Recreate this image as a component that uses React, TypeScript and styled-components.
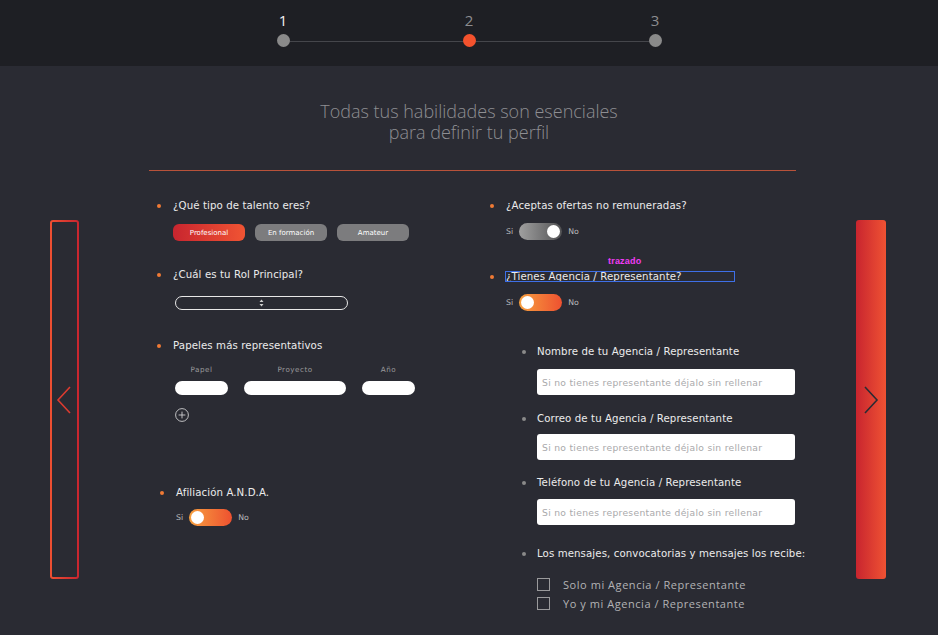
import React from "react";
import styled, { createGlobalStyle } from "styled-components";

const Global = createGlobalStyle`
  html, body { margin: 0; padding: 0; background: #2a2b33; }
  body { font-family: "DejaVu Sans", sans-serif; width: 938px; height: 635px; overflow: hidden; }
  * { box-sizing: border-box; }
`;

const Header = styled.header`
  height: 66px;
  background: #1e1f24;
  display: flex;
  justify-content: center;
  padding-top: 11px;
`;

const Stepper = styled.div`
  position: relative;
  width: 386px;
  display: flex;
  justify-content: space-between;
  &::before {
    content: "";
    position: absolute;
    left: 7px;
    right: 7px;
    top: 30px;
    height: 1px;
    background: #45464b;
  }
`;

const Step = styled.div`
  width: 14px;
  display: flex;
  flex-direction: column;
  align-items: center;
  gap: 5px;
  position: relative;
`;

const StepNum = styled.span<{ $active?: boolean }>`
  font-family: "Open Sans", sans-serif;
  font-size: 15px;
  line-height: 18px;
  color: ${(p) => (p.$active ? "#f2f2f2" : "#8d8d90")};
`;

const Dot = styled.span<{ $current?: boolean }>`
  width: 13px;
  height: 13px;
  border-radius: 50%;
  background: ${(p) => (p.$current ? "#f4522d" : "#8a8a8a")};
`;

const Title = styled.h1`
  margin: 0;
  padding-top: 35px;
  text-align: center;
  font-family: "Open Sans", sans-serif;
  font-weight: 300;
  font-size: 18px;
  line-height: 21px;
  color: #8e8e92;
`;

const TitleLine = styled.span`
  display: block;
`;

const Divider = styled.hr`
  margin: 27px 142px 0 149px;
  border: none;
  height: 1px;
  background: #b8523a;
`;

const BodyRow = styled.div`
  display: flex;
  align-items: flex-start;
  padding-left: 50px;
`;

const NavLeft = styled.button`
  margin-top: 49px;
  width: 29px;
  height: 359px;
  border: 2px solid transparent;
  border-radius: 3px;
  background: linear-gradient(#2a2b33, #2a2b33) padding-box,
    linear-gradient(90deg, #ef5032, #c8252f) border-box;
  display: flex;
  align-items: center;
  justify-content: center;
  padding: 0 2px 0 0;
  cursor: pointer;
`;

const NavRight = styled.button`
  margin-top: 49px;
  margin-left: 60px;
  width: 30px;
  height: 359px;
  border: none;
  border-radius: 3px;
  background: linear-gradient(90deg, #c8252f, #ef5233);
  display: flex;
  align-items: center;
  justify-content: center;
  padding: 0;
  cursor: pointer;
`;

const Form = styled.div`
  margin-left: 70px;
  width: 647px;
  padding: 28px 0 0 8px;
  display: grid;
  grid-template-columns: 333px 1fr;
`;

const Column = styled.div`
  display: flex;
  flex-direction: column;
`;

const Field = styled.div<{ $mt?: number; $indent?: number }>`
  margin-top: ${(p) => p.$mt ?? 0}px;
  padding-left: ${(p) => p.$indent ?? 0}px;
  display: flex;
  flex-direction: column;
`;

const Label = styled.div<{ $sub?: boolean }>`
  position: relative;
  display: flex;
  align-items: center;
  gap: ${(p) => (p.$sub ? 11 : 12)}px;
  font-size: 10.2px;
  line-height: 14px;
  color: #ececec;
  letter-spacing: 0.1px;
  white-space: nowrap;
  &::before {
    content: "";
    width: 4px;
    height: 4px;
    border-radius: 50%;
    flex: none;
    background: ${(p) => (p.$sub ? "#8a8a8a" : "#f07a35")};
  }
`;

const LabelText = styled.span<{ $outlined?: boolean }>`
  position: relative;
  ${(p) =>
    p.$outlined
      ? `outline: 1px solid #3e6fe6; width: 228px; line-height: 9px; height: 9px;`
      : ""}
`;

const Tag = styled.span`
  position: absolute;
  left: 102px;
  top: -15px;
  font-family: "Liberation Sans", sans-serif;
  font-weight: bold;
  font-size: 9px;
  letter-spacing: 0.2px;
  color: #f03cf5;
`;

const Content = styled.div<{ $mt: number; $indent?: number }>`
  margin-top: ${(p) => p.$mt}px;
  padding-left: ${(p) => p.$indent ?? 16}px;
`;

const Pills = styled.div`
  display: flex;
  gap: 9px;
`;

const Pill = styled.span<{ $active?: boolean }>`
  width: 72px;
  height: 17px;
  border-radius: 6px;
  display: flex;
  align-items: center;
  justify-content: center;
  font-size: 7px;
  color: #fff;
  background: ${(p) =>
    p.$active ? "linear-gradient(90deg, #c8252f, #f05433)" : "#7c7c7e"};
  & + & { margin-left: 1px; }
`;

const Select = styled.div`
  margin-left: 2px;
  width: 173px;
  height: 14px;
  border: 1px solid #e8e8e8;
  border-radius: 8px;
  display: flex;
  align-items: center;
  justify-content: center;
`;

const RoleGrid = styled.div`
  display: grid;
  grid-template-columns: 53px 102px 53px;
  column-gap: 16px;
  row-gap: 6px;
  margin-left: 2px;
`;

const ColHead = styled.span`
  text-align: center;
  font-size: 7.2px;
  letter-spacing: 0.5px;
  color: #9a9a9c;
  line-height: 10px;
`;

const PillInput = styled.div`
  height: 14px;
  border-radius: 8px;
  background: #fff;
`;

const AddButton = styled.span`
  display: block;
  margin: 12px 0 0 2px;
  width: 14px;
  height: 14px;
`;

const ToggleRow = styled.div`
  display: flex;
  align-items: center;
  gap: 6px;
  font-size: 7.8px;
  color: #b9b9bb;
`;

const Toggle = styled.span<{ $on?: boolean }>`
  width: 43px;
  height: 17px;
  border-radius: 9px;
  display: flex;
  align-items: center;
  padding: 0 2px;
  justify-content: ${(p) => (p.$on ? "flex-start" : "flex-end")};
  background: ${(p) =>
    p.$on
      ? "linear-gradient(90deg, #f7a03f, #ee5130)"
      : "linear-gradient(90deg, #a0a0a0, #525254)"};
  &::after {
    content: "";
    width: 13px;
    height: 13px;
    border-radius: 50%;
    background: #fff;
  }
`;

const TextInput = styled.div`
  width: 258px;
  height: 26px;
  background: #fff;
  border-radius: 3px;
  display: flex;
  align-items: center;
  padding-left: 5px;
  font-size: 9.2px;
  color: #a9a9ab;
  letter-spacing: 0.3px;
`;

const CheckList = styled.div`
  display: flex;
  flex-direction: column;
  gap: 8px;
`;

const Check = styled.label`
  display: flex;
  align-items: center;
  gap: 13px;
  height: 11px;
  font-family: "Open Sans", sans-serif;
  font-size: 11px;
  line-height: 11px;
  letter-spacing: 0.55px;
  color: #b3b3b5;
  &::before {
    content: "";
    width: 11px;
    height: 11px;
    border: 1px solid #9a9a9c;
    flex: none;
  }
`;

const Chevron = ({ dir, color }: { dir: "left" | "right"; color: string }) => (
  <svg width="16" height="28" viewBox="0 0 16 28" fill="none">
    <path
      d={dir === "left" ? "M14 1 L2 14 L14 27" : "M2 1 L14 14 L2 27"}
      stroke={color}
      strokeWidth="1.6"
    />
  </svg>
);

export default function App() {
  return (
    <>
      <Global />
      <Header>
        <Stepper>
          <Step>
            <StepNum $active>1</StepNum>
            <Dot />
          </Step>
          <Step>
            <StepNum>2</StepNum>
            <Dot $current />
          </Step>
          <Step>
            <StepNum>3</StepNum>
            <Dot />
          </Step>
        </Stepper>
      </Header>
      <Title>
        <TitleLine>Todas tus habilidades son esenciales</TitleLine>
        <TitleLine>para definir tu perfil</TitleLine>
      </Title>
      <Divider />
      <BodyRow>
        <NavLeft aria-label="Anterior">
          <Chevron dir="left" color="#dc3b30" />
        </NavLeft>
        <Form>
          <Column>
            <Field>
              <Label>¿Qué tipo de talento eres?</Label>
              <Content $mt={11}>
                <Pills>
                  <Pill $active>Profesional</Pill>
                  <Pill>En formación</Pill>
                  <Pill>Amateur</Pill>
                </Pills>
              </Content>
            </Field>
            <Field $mt={27}>
              <Label>¿Cuál es tu Rol Principal?</Label>
              <Content $mt={14}>
                <Select>
                  <svg width="5" height="8" viewBox="0 0 5 8">
                    <path d="M2.5 0.5 L4.5 3 L0.5 3 Z M2.5 7.5 L4.5 5 L0.5 5 Z" fill="#d0d0d0" />
                  </svg>
                </Select>
              </Content>
            </Field>
            <Field $mt={29}>
              <Label>Papeles más representativos</Label>
              <Content $mt={12}>
                <RoleGrid>
                  <ColHead>Papel</ColHead>
                  <ColHead>Proyecto</ColHead>
                  <ColHead>Año</ColHead>
                  <PillInput />
                  <PillInput />
                  <PillInput />
                </RoleGrid>
                <AddButton>
                  <svg width="14" height="14" viewBox="0 0 14 14" fill="none">
                    <circle cx="7" cy="7" r="6.4" stroke="#cfcfd1" strokeWidth="0.9" />
                    <path d="M7 3.6 V10.4 M3.6 7 H10.4" stroke="#cfcfd1" strokeWidth="0.9" />
                  </svg>
                </AddButton>
              </Content>
            </Field>
            <Field $mt={65} $indent={3}>
              <Label>Afiliación A.N.D.A.</Label>
              <Content $mt={9}>
                <ToggleRow>
                  Si
                  <Toggle $on />
                  No
                </ToggleRow>
              </Content>
            </Field>
          </Column>
          <Column>
            <Field>
              <Label>¿Aceptas ofertas no remuneradas?</Label>
              <Content $mt={10}>
                <ToggleRow>
                  Si
                  <Toggle />
                  No
                </ToggleRow>
              </Content>
            </Field>
            <Field $mt={32}>
              <Label>
                <LabelText $outlined>
                  ¿Tienes Agencia / Representante?
                  <Tag>trazado</Tag>
                </LabelText>
              </Label>
              <Content $mt={13}>
                <ToggleRow>
                  Si
                  <Toggle $on />
                  No
                </ToggleRow>
              </Content>
            </Field>
            <Field $mt={34} $indent={32}>
              <Label $sub>Nombre de tu Agencia / Representante</Label>
              <Content $mt={10} $indent={15}>
                <TextInput>Si no tienes representante déjalo sin rellenar</TextInput>
              </Content>
            </Field>
            <Field $mt={17} $indent={32}>
              <Label $sub>Correo de tu Agencia / Representante</Label>
              <Content $mt={8} $indent={15}>
                <TextInput>Si no tienes representante déjalo sin rellenar</TextInput>
              </Content>
            </Field>
            <Field $mt={16} $indent={32}>
              <Label $sub>Teléfono de tu Agencia / Representante</Label>
              <Content $mt={9} $indent={15}>
                <TextInput>Si no tienes representante déjalo sin rellenar</TextInput>
              </Content>
            </Field>
            <Field $mt={22} $indent={32}>
              <Label $sub>Los mensajes, convocatorias y mensajes los recibe:</Label>
              <Content $mt={18} $indent={15}>
                <CheckList>
                  <Check>Solo mi Agencia / Representante</Check>
                  <Check>Yo y mi Agencia / Representante</Check>
                </CheckList>
              </Content>
            </Field>
          </Column>
        </Form>
        <NavRight aria-label="Siguiente">
          <Chevron dir="right" color="#2a2b33" />
        </NavRight>
      </BodyRow>
    </>
  );
}
